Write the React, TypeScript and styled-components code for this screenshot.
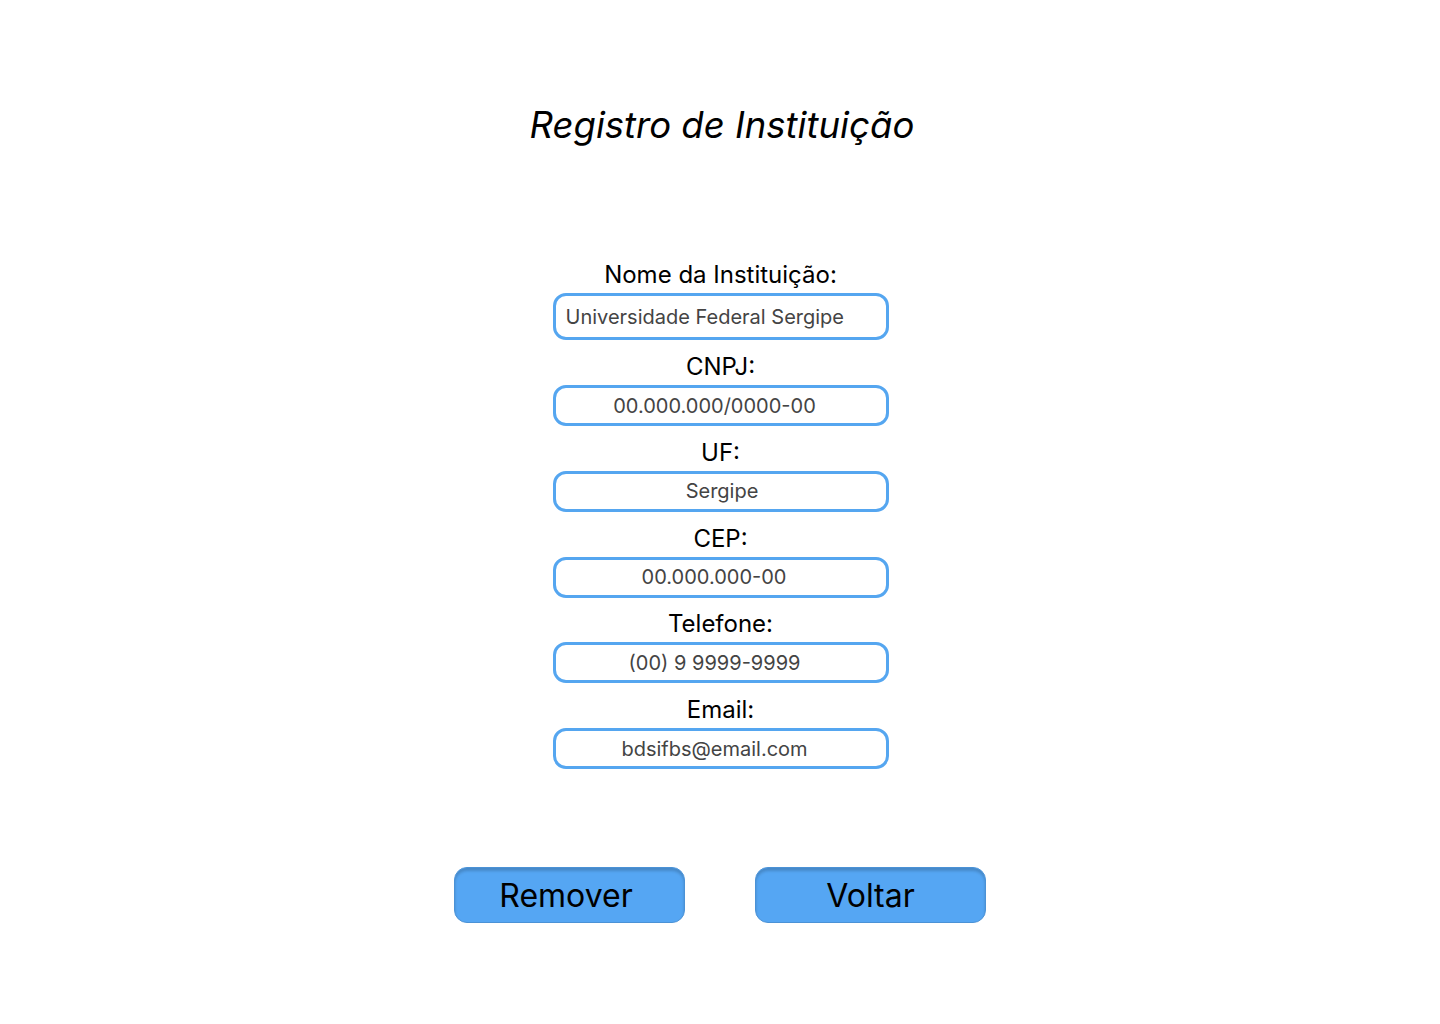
import React from "react";
import styled, { createGlobalStyle } from "styled-components";

const Global = createGlobalStyle`
  html, body { margin: 0; padding: 0; background: #ffffff; }
  body { font-family: Inter, "Noto Sans", sans-serif; }
`;

const Page = styled.main`
  width: 1440px;
  min-height: 1024px;
  display: flex;
  flex-direction: column;
  align-items: center;
  box-sizing: border-box;
  padding-top: 100px;
`;

const Title = styled.h1`
  margin: 0;
  padding-left: 4px;
  font-size: 36.5px;
  font-weight: 400;
  font-style: italic;
  color: #000;
  line-height: 50px;
`;

const Form = styled.form`
  margin-top: 98.5px;
  display: flex;
  flex-direction: column;
  align-items: center;
  width: 336px;
  padding-left: 1px;
`;

const Label = styled.label`
  margin-top: 11.8px;
  margin-bottom: 4px;
  font-size: 24px;
  color: #000;
  line-height: 29px;
  text-align: center;
`;

const Field = styled.div<{ $tall?: boolean; $shift: number }>`
  width: 336px;
  height: ${(p) => (p.$tall ? 47 : 41)}px;
  box-sizing: border-box;
  border: 3px solid #55a6f0;
  border-radius: 13px;
  display: flex;
  align-items: center;
  justify-content: ${(p) => (p.$tall ? "flex-start" : "center")};
  padding: ${(p) =>
    p.$tall
      ? "0 0 0 10px"
      : p.$shift < 0
      ? `0 ${-p.$shift * 2}px 0 0`
      : `0 0 0 ${p.$shift * 2}px`};
  font-size: 20px;
  color: #444;
`;

const Buttons = styled.div`
  margin-top: 98px;
  display: flex;
  gap: 70px;
`;

const Button = styled.button<{ $shift?: number }>`
  width: 231px;
  height: 56px;
  border: 1px solid #4b92d6;
  border-radius: 13px;
  background: #55a6f3;
  box-shadow: inset 0 3px 3px rgba(0, 0, 0, 0.18);
  font-family: Inter, sans-serif;
  font-size: 32px;
  color: #000;
  cursor: pointer;
  padding: 0 ${(p) => (p.$shift ? p.$shift * 2 : 0)}px 0 0;
`;

const fields = [
  { label: "Nome da Instituição:", value: "Universidade Federal Sergipe", tall: true, shift: 0 },
  { label: "CNPJ:", value: "00.000.000/0000-00", shift: -6 },
  { label: "UF:", value: "Sergipe", shift: 1.5 },
  { label: "CEP:", value: "00.000.000-00", shift: -6.5 },
  { label: "Telefone:", value: "(00) 9 9999-9999", shift: -6 },
  { label: "Email:", value: "bdsifbs@email.com", shift: -6 },
];

export default function App() {
  return (
    <>
      <Global />
      <Page>
        <Title>Registro de Instituição</Title>
        <Form>
          {fields.map((f) => (
            <React.Fragment key={f.label}>
              <Label>{f.label}</Label>
              <Field $tall={f.tall} $shift={f.shift}>
                {f.value}
              </Field>
            </React.Fragment>
          ))}
        </Form>
        <Buttons>
          <Button type="button" $shift={3.5}>
            Remover
          </Button>
          <Button type="button">Voltar</Button>
        </Buttons>
      </Page>
    </>
  );
}
